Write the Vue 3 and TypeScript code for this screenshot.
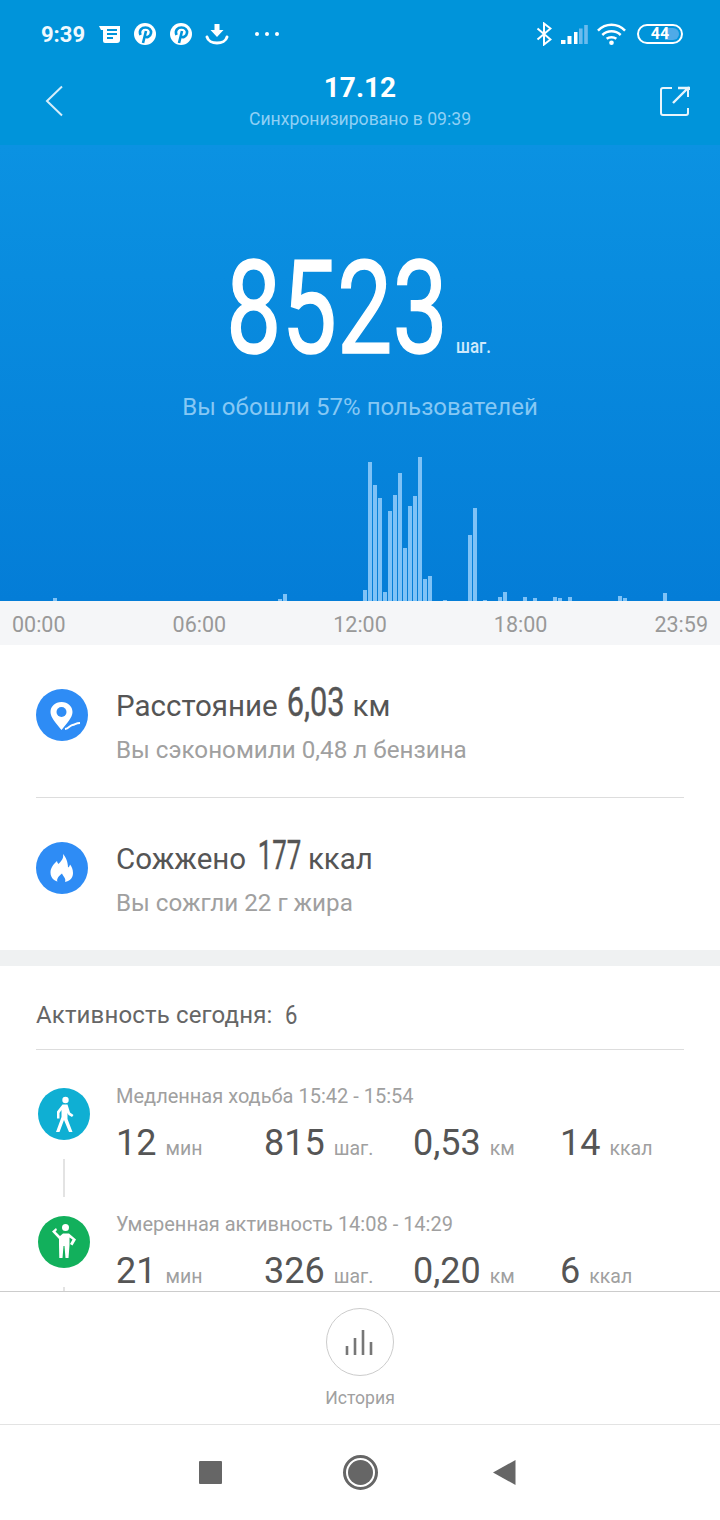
<template>
  <div class="page">
    <header class="top">
      <div class="status">
        <div class="status-left">
          <span class="clock">9:39</span>
          <svg class="ic" width="24" height="24" viewBox="0 0 24 24">
            <path d="M1 4h21v14a3 3 0 0 1-3 3H7a2 2 0 0 1-2-2V8H3z" fill="#fff" />
            <path d="M9 8h10M9 12h10M9 16h6" stroke="#0094da" stroke-width="2" />
          </svg>
          <svg class="ic pin" width="24" height="24" viewBox="0 0 24 24">
            <circle cx="12" cy="12" r="11" fill="#fff" />
            <path d="M10 21l3-12M7.500 13C5.500 8 9 5.500 12.500 5.500S18.500 8 18 11c-.5 3.500-4.500 5.500-6.500 3" fill="none" stroke="#0094da" stroke-width="2.600" />
          </svg>
          <svg class="ic pin" width="24" height="24" viewBox="0 0 24 24">
            <circle cx="12" cy="12" r="11" fill="#fff" />
            <path d="M10 21l3-12M7.500 13C5.500 8 9 5.500 12.500 5.500S18.500 8 18 11c-.5 3.500-4.500 5.500-6.500 3" fill="none" stroke="#0094da" stroke-width="2.600" />
          </svg>
          <svg class="ic dl" width="24" height="24" viewBox="0 0 24 24">
            <path d="M9.500 2h5v6h4l-6.500 7-6.500-7h4z" fill="#fff" />
            <path d="M2 15c1 4 5.500 6 10 6s9-2 10-6" fill="none" stroke="#fff" stroke-width="3" stroke-linecap="round" />
          </svg>
          <span class="more"><i></i><i></i><i></i></span>
        </div>
        <div class="status-right">
          <svg width="16" height="24" viewBox="0 0 16 24">
            <path d="M1.500 6.500l13 11-6.500 5V1.500l6.500 5-13 11" fill="none" stroke="#fff" stroke-width="2" />
          </svg>
          <svg class="signal" width="27" height="20" viewBox="0 0 27 20">
            <rect x="0" y="16" width="4.500" height="4" fill="#fff" />
            <rect x="6.500" y="12" width="4" height="8" fill="#fff" />
            <rect x="13" y="8" width="3.500" height="12" fill="#fff" />
            <rect x="18" y="4.500" width="3.600" height="15.500" fill="#6bbbed" />
            <rect x="23.200" y="1" width="3.600" height="19" fill="#6bbbed" />
          </svg>
          <svg class="wifi" width="29" height="24" viewBox="0 0 30 24">
            <path d="M1 8.500c8-8 20-8 28 0M5.500 13c5.500-5 13.500-5 19 0M10 17c2.800-2.300 7.200-2.300 10 0" fill="none" stroke="#fff" stroke-width="2.600" />
            <circle cx="15" cy="21" r="2.400" fill="#fff" />
          </svg>
          <div class="battery"><span class="battery-text">44</span></div>
        </div>
      </div>
      <div class="appbar">
        <svg width="20" height="32" viewBox="0 0 20 32">
          <path d="M18 1.500L3 16l15 14.500" fill="none" stroke="#d5edfa" stroke-width="2" />
        </svg>
        <div class="appbar-title">
          <div class="date">17.12</div>
          <div class="sync">Синхронизировано в 09:39</div>
        </div>
        <svg width="30" height="30" viewBox="0 0 30 30">
          <path d="M12 2H3a2 2 0 0 0-2 2v23a2 2 0 0 0 2 2h23a2 2 0 0 0 2-2v-5" fill="none" stroke="#e8f5fc" stroke-width="2" />
          <path d="M29 1L13 17M18 2h11v2" fill="none" stroke="#e8f5fc" stroke-width="2.400" />
          <path d="M28 2v9" fill="none" stroke="#e8f5fc" stroke-width="2" />
        </svg>
      </div>
    </header>

    <section class="hero">
      <div class="steps">
        <span class="steps-num">8523</span>
        <span class="steps-unit">шаг.</span>
      </div>
      <div class="beat">Вы обошли 57% пользователей</div>
      <div class="chart">
        <span v-for="(h, i) in bars" :key="i" class="bar" :style="{ height: h + 'px' }"></span>
      </div>
    </section>

    <div class="axis">
      <span v-for="t in ticks" :key="t">{{ t }}</span>
    </div>

    <section class="stats">
      <div class="stat">
        <svg class="stat-icon" width="52" height="52" viewBox="0 0 52 52">
          <circle cx="26" cy="26" r="26" fill="#2e8cf5" />
          <path d="M25.500 13c-6.500 0-11 4.500-11 10 0 5.500 5.500 11 11 18 5.500-7 11-12.500 11-18 0-5.500-4.500-10-11-10z" fill="#fff" />
          <circle cx="25.500" cy="23" r="5" fill="#2e8cf5" />
          <path d="M29 40c4-.5 4.500-3.500 7.500-4s3-2 7.500-2" fill="none" stroke="#fff" stroke-width="1.800" />
        </svg>
        <div class="stat-text">
          <div class="stat-main">Расстояние <span class="cond">6,03</span> км</div>
          <div class="stat-sub">Вы сэкономили 0,48 л бензина</div>
        </div>
      </div>
      <div class="stat stat-last">
        <svg class="stat-icon" width="52" height="52" viewBox="0 0 52 52">
          <circle cx="26" cy="26" r="26" fill="#2e8cf5" />
          <path d="M27 12c1 5-2 7-4.500 10-1-1-1.500-2-1.500-3-3.500 3-6.500 7-6.500 11.500 0 6 5 9.500 9.500 9.500h4c5 0 9-3.500 9-9 0-4-1.500-6.500-3-8.500-.3 1.500-1 2.500-2 3 0-5-2-10.500-5-13.500z" fill="#fff" />
          <path d="M21.500 40c-1-2.500 0-5 4.500-8.500 1 3 4.500 5 3 8.500z" fill="#2e8cf5" />
        </svg>
        <div class="stat-text">
          <div class="stat-main">Сожжено <span class="cond cond-tight">177</span> ккал</div>
          <div class="stat-sub">Вы сожгли 22 г жира</div>
        </div>
      </div>
    </section>

    <section class="activity">
      <div class="activity-head">
        <span>Активность сегодня:</span>
        <span class="activity-count">6</span>
      </div>
      <div v-for="(a, i) in activities" :key="i" class="act">
        <div class="act-side">
          <svg v-if="i === 0" width="52" height="52" viewBox="0 0 52 52">
            <circle cx="26" cy="26" r="26" fill="#0fafd3" />
            <circle cx="27.500" cy="12" r="3.200" fill="#fff" />
            <path d="M24.500 16.500h5l2.500 8 3.500 2.500-1.500 2-3.500-2-1-2v6l5 13h-3.500l-5-12-4.500 12h-3.500l5.500-15v-7l-2 3v5.500h-2.500v-7z" fill="#fff" />
          </svg>
          <svg v-else width="52" height="52" viewBox="0 0 52 52">
            <circle cx="26" cy="26" r="26" fill="#12b05c" />
            <circle cx="27.500" cy="11.500" r="3.500" fill="#fff" />
            <path d="M14 15.500l4-3.500 1 2-1.500 1.500 4.500 4.500 3-2.500h6l7 6-3.500 6-2.500-1.500 2.500-4.500-3-2v7.500l-1 13h-3l-1-12h-1l-1 12h-3.200l-.3-13v-6z" fill="#fff" />
          </svg>
          <span class="act-line"></span>
        </div>
        <div class="act-body">
          <div class="act-title">{{ a.title }}</div>
          <div class="act-values">
            <div v-for="(v, j) in a.values" :key="j" class="act-val">
              <span class="num">{{ v.n }}</span><span class="unit">{{ v.u }}</span>
            </div>
          </div>
        </div>
      </div>
    </section>

    <div class="history">
      <div class="history-btn">
        <svg width="30" height="28" viewBox="0 0 30 28">
          <path d="M2 27v-9M10 27V10M18 27V2M26 27V14" fill="none" stroke="#777" stroke-width="2.600" />
        </svg>
      </div>
      <span class="history-label">История</span>
    </div>

    <nav class="navbar">
      <span class="nav-square"></span>
      <span class="nav-home"><i></i></span>
      <svg width="24" height="27" viewBox="0 0 24 27">
        <path d="M23.500 1v25L1 13.500z" fill="#666" />
      </svg>
    </nav>
  </div>
</template>

<script setup lang="ts">
type Stat = { n: string; u: string }
type Activity = { title: string; values: Stat[] }

const ticks = ['00:00', '06:00', '12:00', '18:00', '23:59']

// bar tops read off the chart, keyed by x position, baseline is y=601
const tops: Record<number, number> = {
  53: 598, 278: 599, 283: 594, 363: 590, 368: 462, 373: 485, 378: 498, 383: 592,
  388: 511, 393: 495, 398: 473, 403: 548, 408: 506, 413: 496, 418: 457, 423: 579,
  428: 576, 443: 600, 468: 535, 473: 508, 483: 600, 498: 597, 503: 592, 523: 597,
  533: 598, 553: 597, 558: 598, 568: 597, 618: 596, 623: 598, 663: 593,
}

const bars: number[] = []
for (let x = 3; x < 720; x += 5) {
  bars.push(tops[x] ? 601 - tops[x] : 0)
}

const activities: Activity[] = [
  {
    title: 'Медленная ходьба 15:42 - 15:54',
    values: [
      { n: '12', u: 'мин' },
      { n: '815', u: 'шаг.' },
      { n: '0,53', u: 'км' },
      { n: '14', u: 'ккал' },
    ],
  },
  {
    title: 'Умеренная активность 14:08 - 14:29',
    values: [
      { n: '21', u: 'мин' },
      { n: '326', u: 'шаг.' },
      { n: '0,20', u: 'км' },
      { n: '6', u: 'ккал' },
    ],
  },
]
</script>

<style>
html,
body {
  margin: 0;
  background: #fff;
}
</style>

<style scoped>
.page {
  width: 720px;
  height: 1520px;
  display: flex;
  flex-direction: column;
  overflow: hidden;
  font-family: Roboto, 'Noto Sans', sans-serif;
  background: #fff;
}

.top {
  height: 145px;
  flex: none;
  background: #0094da;
  color: #fff;
}

.status {
  height: 68px;
  padding: 0 37px 0 41px;
  display: flex;
  align-items: center;
  justify-content: space-between;
}

.status-left,
.status-right {
  display: flex;
  align-items: center;
}

.clock {
  font-size: 22px;
  font-weight: 700;
  color: #f0f9fe;
  margin-right: 13px;
}

.ic {
  margin-right: 11px;
}

.pin {
  margin-right: 12px;
}

.dl {
  margin-right: 26px;
}

.more {
  display: flex;
  gap: 6px;
}

.more i {
  width: 4px;
  height: 4px;
  background: #fff;
  border-radius: 50%;
}

.status-right svg {
  margin-right: 9px;
}

.status-right .wifi {
  margin-right: 11px;
}

.battery {
  width: 46px;
  height: 20px;
  box-sizing: border-box;
  border: 2px solid #fff;
  border-radius: 10px;
  position: relative;
  display: flex;
  align-items: center;
  justify-content: center;
  overflow: hidden;
}

.battery::after {
  content: '';
  position: absolute;
  right: 2px;
  top: 2px;
  bottom: 2px;
  width: 14px;
  background: #4faae8;
  border-radius: 0 6px 6px 0;
}

.battery-text {
  position: relative;
  z-index: 1;
  font-size: 16px;
  font-weight: 700;
  line-height: 16px;
}

.appbar {
  height: 77px;
  padding: 0 30px 0 44px;
  display: flex;
  align-items: center;
  justify-content: space-between;
  margin-top: -6px;
}

.appbar-title {
  text-align: center;
  margin-right: 4px;
}

.date {
  font-size: 28px;
  font-weight: 700;
  line-height: 34px;
}

.sync {
  margin-top: 2px;
  font-size: 17.600px;
  line-height: 24px;
  color: #8fd0f5;
}

.hero {
  height: 456px;
  flex: none;
  background: linear-gradient(#0b92e2, #047dd7);
  display: flex;
  flex-direction: column;
  position: relative;
}

.steps {
  margin-top: 94px;
  height: 140px;
  padding-left: 226px;
  display: flex;
  align-items: flex-end;
  color: #fff;
}

.steps-num {
  display: inline-block;
  width: 230px;
  font-size: 129px;
  font-weight: 400;
  -webkit-text-stroke: 1.500px #fff;
  line-height: 140px;
  transform: scaleX(0.765);
  transform-origin: left center;
  white-space: nowrap;
}

.steps-unit {
  font-size: 20px;
  font-weight: 500;
  margin-bottom: 21px;
  color: #cfe9fb;
  transform: scaleX(0.85);
  transform-origin: left center;
  width: 40px;
}

.beat {
  margin-top: 13px;
  text-align: center;
  font-size: 24px;
  letter-spacing: 0.05px;
  line-height: 30px;
  color: #86c8f4;
}

.chart {
  margin-top: auto;
  padding-left: 3px;
  display: flex;
  gap: 1px;
  align-items: flex-end;
  height: 150px;
}

.bar {
  width: 4px;
  flex: none;
  background: #7fc2f6;
}

.axis {
  height: 44px;
  flex: none;
  box-sizing: border-box;
  padding: 2px 12px 0;
  background: #f5f6f8;
  display: flex;
  justify-content: space-between;
  align-items: center;
  font-size: 21.500px;
  color: #999;
}

.stats {
  flex: none;
  height: 305px;
  padding: 0 36px;
  border-bottom: 16px solid #eff1f2;
}

.stat {
  height: 153px;
  box-sizing: border-box;
  border-bottom: 1px solid #ddd;
  display: flex;
  align-items: flex-start;
  padding-top: 44px;
  gap: 28px;
}

.stat-last {
  height: 152px;
  border-bottom: none;
  padding-top: 44px;
}

.stat-icon {
  flex: none;
}

.stat-text {
  margin-top: -7px;
}

.stat-main {
  font-size: 29.500px;
  line-height: 40px;
  color: #555;
}

.cond {
  display: inline-block;
  font-size: 41px;
  line-height: 40px;
  -webkit-text-stroke: 0.400px #555;
  transform: scaleX(0.75);
  margin: 0 -9px 0 -8px;
}

.cond-tight {
  transform: scaleX(0.63);
  margin: 0 -14px 0 -8px;
}

.stat-sub {
  margin-top: 9px;
  font-size: 24.200px;
  line-height: 30px;
  color: #a0a0a0;
}

.activity {
  flex: 1;
  min-height: 0;
  overflow: hidden;
  padding: 0 36px;
}

.activity-head {
  height: 84px;
  box-sizing: border-box;
  border-bottom: 1px solid #ddd;
  padding-top: 15px;
  display: flex;
  align-items: center;
  gap: 11px;
  font-size: 24px;
  letter-spacing: 0.15px;
  color: #666;
}

.activity-count {
  display: inline-block;
  font-size: 26px;
  transform: scaleX(0.85);
}

.act {
  display: flex;
  height: 128px;
  padding-top: 38px;
  box-sizing: border-box;
}

.act-side {
  width: 56px;
  flex: none;
  margin-left: 2px;
  margin-right: 22px;
  display: flex;
  flex-direction: column;
}

.act-side svg {
  flex: none;
}

.act-line {
  width: 2px;
  height: 38px;
  margin: 19px 0 0 25px;
  background: #e3e3e3;
  flex: none;
}

.act-body {
  margin-top: -4px;
}

.act-title {
  font-size: 20px;
  line-height: 24px;
  color: #a0a0a0;
}

.act-values {
  display: grid;
  grid-template-columns: 148px 149px 147px 148px;
  margin-top: 13px;
}

.act-val {
  display: flex;
  align-items: baseline;
}

.num {
  font-size: 36px;
  line-height: 44px;
  color: #555;
}

.unit {
  font-size: 19.500px;
  color: #a0a0a0;
  margin-left: 9px;
}

.history {
  flex: none;
  height: 134px;
  box-sizing: border-box;
  border-top: 1px solid #ccc;
  border-bottom: 1px solid #e3e3e3;
  background: #fff;
  display: flex;
  flex-direction: column;
  align-items: center;
  padding-top: 16px;
}

.history-btn {
  width: 68px;
  height: 68px;
  box-sizing: border-box;
  border: 1px solid #ccc;
  border-radius: 50%;
  display: flex;
  align-items: center;
  justify-content: center;
}

.history-label {
  margin-top: 10px;
  font-size: 17.600px;
  line-height: 24px;
  color: #a0a0a0;
}

.navbar {
  flex: none;
  height: 95px;
  background: #fff;
  display: grid;
  grid-template-columns: 24px 36px 24px;
  justify-content: center;
  column-gap: 114px;
  align-items: center;
  justify-items: center;
}

.nav-square {
  width: 23px;
  height: 23px;
  margin-right: 12px;
  background: #666;
  border-radius: 1px;
}

.nav-home {
  width: 35px;
  height: 35px;
  box-sizing: border-box;
  border: 3px solid #666;
  border-radius: 50%;
  display: flex;
  align-items: center;
  justify-content: center;
}

.nav-home i {
  width: 25px;
  height: 25px;
  background: #666;
  border-radius: 50%;
}
</style>
